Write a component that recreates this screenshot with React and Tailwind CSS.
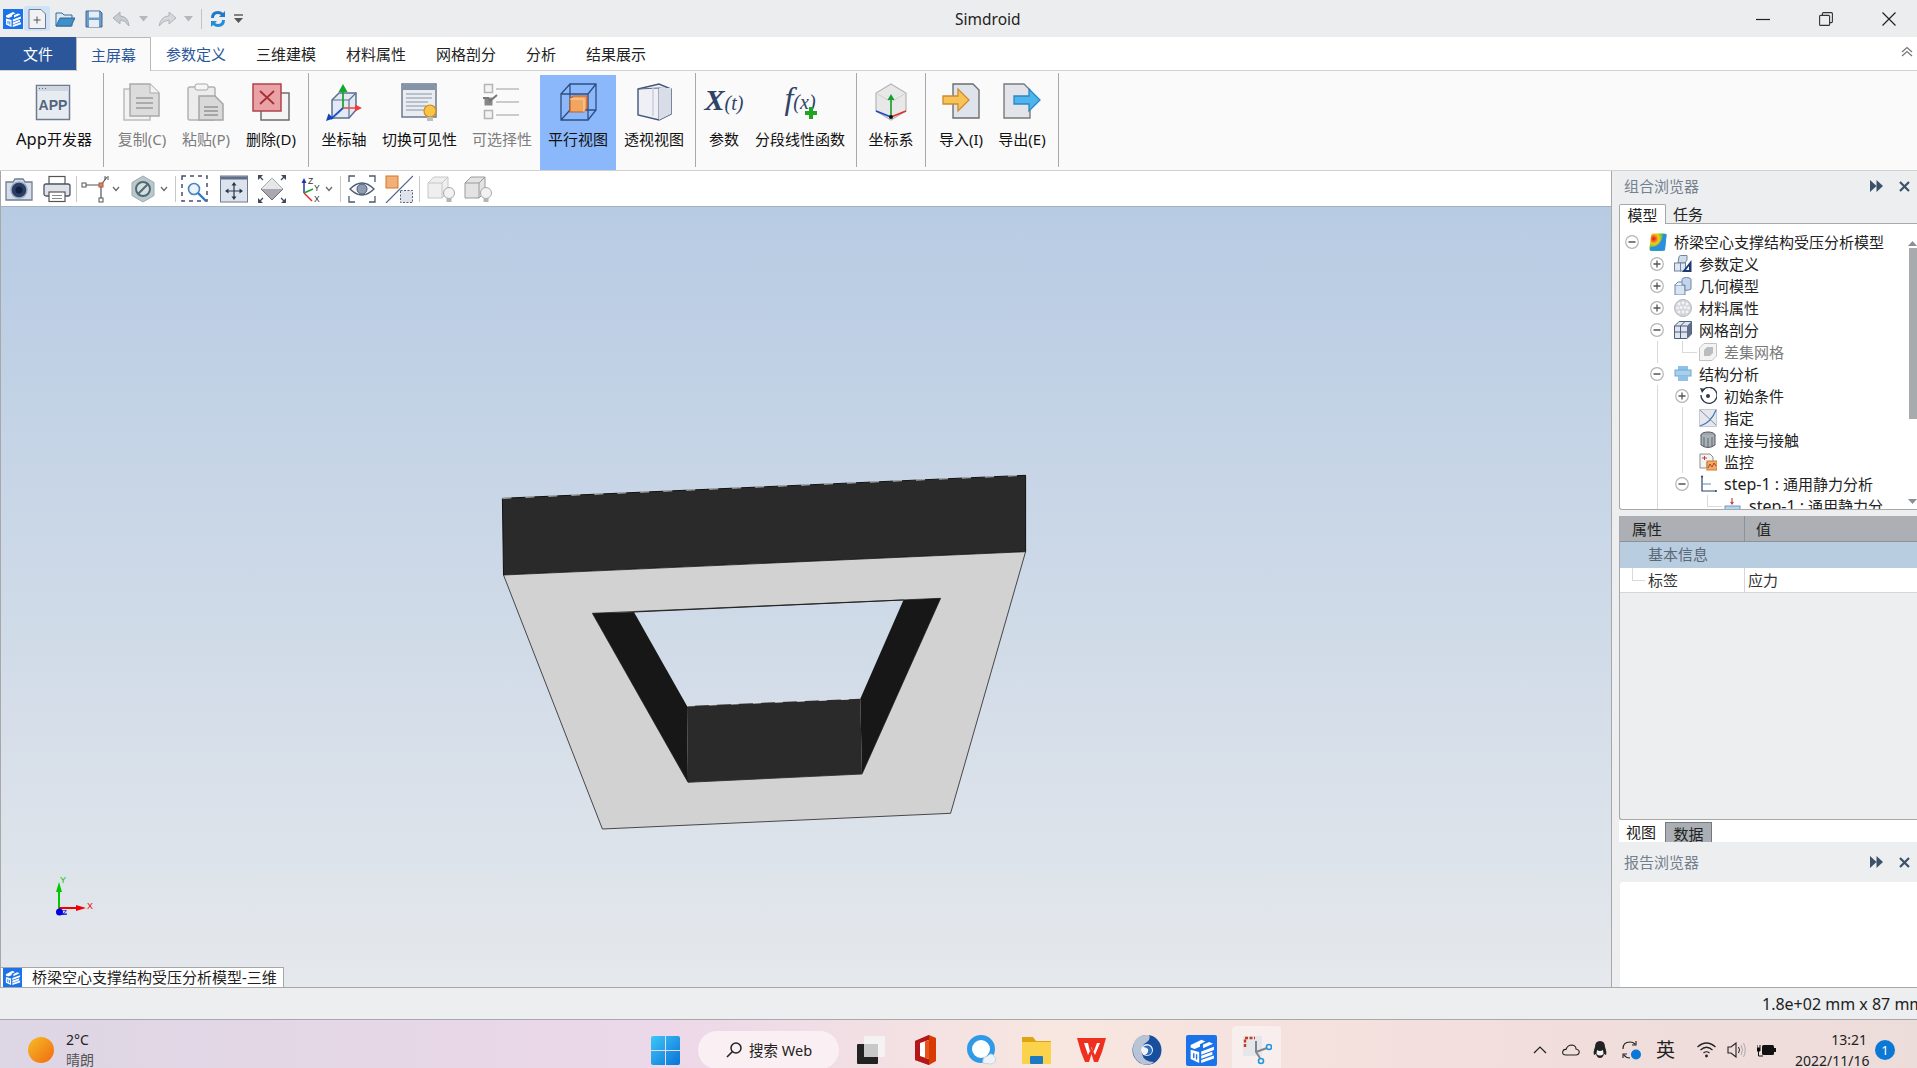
import React from 'react';

const FONT = "font-['Noto_Sans','Noto_Sans_CJK_SC',sans-serif]";

function Svg({ w, h, view, className = '', children }) {
    return (
        <svg width={w} height={h ?? w} viewBox={view ?? `0 0 ${w} ${h ?? w}`} className={`block shrink-0 ${className}`}>
            {children}
        </svg>
    );
}

// --- small app logo, reused in title bar, doc tab and taskbar
function Logo({ size = 20 }) {
    return (
        <Svg w={size} view="0 0 20 20">
            <rect width="20" height="20" fill="#1a73e8" />
            <path d="M3 6.5 L10 3 L12.5 4.2 L9 6 L9 7.5 L5.5 9 L3 8Z" fill="#fff" />
            <path d="M11 6.2 L15 4.5 L17.5 5.6 L11 8.6Z" fill="#fff" />
            <path d="M3 9.5 L8.5 11 V18 L3 15.5Z" fill="#fff" />
            <path d="M5 11.8 V14.8 M6.8 12.4 V15.8" stroke="#1a73e8" strokeWidth="0.9" />
            <path d="M9.8 10.6 L18 7.5 V9.6 L9.8 12.7Z M9.8 13.4 L17 10.8 V12.8 L9.8 15.4Z M9.8 16.1 L18 13.2 V15.2 L9.8 18Z" fill="#fff" />
        </Svg>
    );
}

const Chevron = ({ className = '' }) => (
    <Svg w={8} h={6} className={className}>
        <path d="M1 1 L4 4.5 L7 1" fill="none" stroke="#666" strokeWidth="1.2" />
    </Svg>
);

const SmallTri = ({ className = '' }) => (
    <Svg w={9} h={6} className={className}>
        <path d="M0 0 H9 L4.5 5.5Z" fill="#b4b8bd" />
    </Svg>
);

const Sep = ({ className = '' }) => <div className={`w-px h-[26px] bg-[#c8c8c8] shrink-0 ${className}`} />;

// --- ribbon icons (38 box)
const IconApp = () => (
    <Svg w={38}>
        <rect x="1.5" y="2.5" width="33" height="34" fill="#e7ebf2" stroke="#6e7c90" strokeWidth="1.5" />
        <rect x="2" y="3" width="32" height="5" fill="#cfd6e0" />
        <path d="M4 5.5h1M7 5.5h1M10 5.5h1" stroke="#5f6b7c" />
        <text x="18" y="27" textAnchor="middle" fontFamily="Liberation Sans" fontWeight="700" fontSize="14" fill="#56657c">APP</text>
    </Svg>
);
const IconCopy = () => (
    <Svg w={38}>
        <rect x="1" y="6" width="26" height="31" fill="#f2f2f2" stroke="#bcbcbc" strokeWidth="1.5" />
        <path d="M7 1 H27 L36 10 V33 H7Z" fill="#dcdcdc" stroke="#a9a9a9" strokeWidth="1.5" />
        <path d="M27 1 V10 H36" fill="#f2f2f2" stroke="#a9a9a9" />
        <path d="M13 15 H30 M13 20 H30 M13 25 H30" stroke="#9a9a9a" strokeWidth="1.5" />
    </Svg>
);
const IconPaste = () => (
    <Svg w={38}>
        <rect x="1" y="4" width="27" height="33" rx="2" fill="#ececec" stroke="#b2b2b2" strokeWidth="1.5" />
        <rect x="8" y="1" width="13" height="6" rx="2" fill="#f6f6f6" stroke="#a8a8a8" />
        <path d="M12 13 H28 L36 21 V37 H12Z" fill="#d9d9d9" stroke="#a5a5a5" strokeWidth="1.5" />
        <path d="M17 24 H31 M17 28 H31 M17 32 H31" stroke="#949494" strokeWidth="1.3" />
    </Svg>
);
const IconDelete = () => (
    <Svg w={38}>
        <rect x="9" y="10" width="28" height="27" fill="#f4f4f4" stroke="#6d6d6d" strokeWidth="1.5" />
        <rect x="1" y="1" width="28" height="27" fill="#e9a3a6" stroke="#b04349" strokeWidth="1.5" />
        <path d="M8 8 L22 21 M22 8 L8 21" stroke="#a92f36" strokeWidth="1.8" />
    </Svg>
);
const IconAxes = () => (
    <Svg w={38}>
        <path d="M7 17 L14 10 H31 V27 L24 35 H7Z" fill="#e3e9f2" stroke="#5d6f8e" strokeWidth="1.5" />
        <path d="M7 17 H24 V35 M24 17 L31 10" fill="none" stroke="#5d6f8e" strokeWidth="1.2" />
        <path d="M18 25 V7" stroke="#1fa534" strokeWidth="1.8" />
        <path d="M13.5 9 L18 1 L22.5 9Z" fill="#11a82a" />
        <path d="M18 25 H30" stroke="#ee4b4b" strokeWidth="1.6" />
        <path d="M30 21.5 L37 25 L30 28.5Z" fill="#ee3b3b" />
        <path d="M18 25 L6 36" stroke="#1d53c4" strokeWidth="1.8" />
        <path d="M1 38 L3.5 30.5 L8.5 35.5Z" fill="#1246b8" />
    </Svg>
);
const IconToggleVis = () => (
    <Svg w={38}>
        <rect x="1" y="1" width="34" height="33" fill="#e9ecf1" stroke="#6c7a8e" strokeWidth="1.5" />
        <rect x="2" y="2" width="32" height="5" fill="#8593a8" />
        <path d="M5 11H31M5 15H31M5 19H27M5 23H25M5 27H25" stroke="#a8b1bf" strokeWidth="1.5" />
        <circle cx="29" cy="28" r="6" fill="#f6c644" stroke="#d18a1c" strokeWidth="1.2" />
        <rect x="26" y="34" width="6" height="4" fill="#b9bec6" />
    </Svg>
);
const IconSelectable = () => (
    <Svg w={38}>
        <g stroke="#b4b4b4" strokeWidth="1.5" fill="#f3f3f3">
            <rect x="1.5" y="1.5" width="8" height="8" />
            <rect x="1.5" y="27.5" width="8" height="8" />
        </g>
        <rect x="1.5" y="14.5" width="8" height="8" fill="#888" />
        <path d="M0 15 H5 L7 18 L14 12" stroke="#777" strokeWidth="2" fill="none" />
        <path d="M13 6H36M13 19H36M13 32H36" stroke="#bcbcbc" strokeWidth="1.6" />
    </Svg>
);
const IconParallel = () => (
    <Svg w={38}>
        <path d="M2 11 H29 V37 H2Z M11 1 H37 V27 H11Z M2 11 L11 1 M29 11 L37 1 M2 37 L11 27 M29 37 L37 27" fill="none" stroke="#2f4d82" strokeWidth="1.3" />
        <path d="M11 16 L14 13 H28 V25 L25 29 H11Z" fill="#f0a561" stroke="#c85c24" strokeWidth="1.2" />
        <path d="M11 16 H25 V29" fill="none" stroke="#f8d8b0" strokeWidth="1" />
    </Svg>
);
const IconPerspective = () => (
    <Svg w={38}>
        <path d="M3 6 L24 1 L36 6 V31 L24 37 L3 32Z" fill="#eef0f5" stroke="#43557a" strokeWidth="1.4" />
        <path d="M3 6 L24 5 V37 M24 5 L36 6" fill="none" stroke="#5a6a8a" strokeWidth="1" />
        <path d="M18 5 V33" stroke="#c9cfdb" strokeWidth="1.5" />
        <path d="M24 5 H36 V31 L24 37Z" fill="#d8dde7" />
    </Svg>
);
const IconParam = () => (
    <Svg w={42} h={38}>
        <text x="21" y="27" textAnchor="middle" fontFamily="Liberation Serif" fontStyle="italic" fill="#2f4368">
            <tspan fontSize="30" fontWeight="700">X</tspan>
            <tspan fontSize="20">(t)</tspan>
        </text>
    </Svg>
);
const IconFx = () => (
    <Svg w={42} h={38}>
        <text x="21" y="26" textAnchor="middle" fontFamily="Liberation Serif" fontStyle="italic" fill="#2f4368">
            <tspan fontSize="32">f</tspan>
            <tspan fontSize="20">(x)</tspan>
        </text>
        <path d="M30 24 H34 V28 H38 V32 H34 V36 H30 V32 H26 V28 H30Z" fill="#1fa51f" />
    </Svg>
);
const IconCoord = () => (
    <Svg w={38}>
        <path d="M19 1 L34 10 V28 L19 37 L4 28 V10Z" fill="#e8e8e8" stroke="#b5b5b5" strokeWidth="1.2" />
        <path d="M4 10 L19 19 L34 10 M19 19 V37" fill="none" stroke="#cfcfcf" />
        <path d="M19 14 V33" stroke="#11a22a" strokeWidth="1.6" />
        <path d="M15.5 17 L19 11 L22.5 17Z" fill="#11a22a" />
        <path d="M19 34 L34 28" stroke="#e0322f" strokeWidth="1.8" />
        <path d="M19 34 L4 28" stroke="#1e49c0" strokeWidth="1.8" />
        <circle cx="19" cy="34" r="2" fill="#111" />
    </Svg>
);
const IconImport = () => (
    <Svg w={38}>
        <path d="M11 1 H31 L37 7 V35 H11Z" fill="#dfe3eb" stroke="#6d6d6d" strokeWidth="1.4" />
        <path d="M1 13 H16 V6 L27 17 L16 28 V21 H1Z" fill="#f6c35a" stroke="#d18a2a" strokeWidth="1.3" />
    </Svg>
);
const IconExport = () => (
    <Svg w={38}>
        <path d="M1 1 H21 L27 7 V35 H1Z" fill="#e2e4ea" stroke="#7a7a7a" strokeWidth="1.4" />
        <path d="M11 13 H26 V6 L37 17 L26 28 V21 H11Z" fill="#4eb4ec" stroke="#2a86c8" strokeWidth="1.3" />
    </Svg>
);

function RibbonBtn({ w, label, muted, active, children }) {
    return (
        <div className={`${w} shrink-0 flex flex-col items-center pt-2 ${active ? 'bg-[#8ab8fb]' : ''}`}>
            {children}
            <div className={`mt-[8px] text-[15px] leading-[20px] whitespace-nowrap ${muted ? 'text-[#7d7d7d]' : 'text-[#111]'}`}>{label}</div>
        </div>
    );
}
const RibbonSep = ({ className = '' }) => <div className={`w-px bg-[#a9a9a9] -mt-[2px] mb-[3px] shrink-0 ${className}`} />;

// --- toolbar icons
const ToolCamera = () => (
    <Svg w={28} className="ml-[4px]">
        <path d="M1 7 H8 L10 4 H18 L20 7 H27 V25 H1Z" fill="#d6dde8" stroke="#6f7f96" strokeWidth="1.3" />
        <circle cx="14" cy="15" r="8" fill="#2a3e66" stroke="#9eaabc" strokeWidth="1.4" />
        <circle cx="14" cy="15" r="3.5" fill="#10203f" />
    </Svg>
);
const ToolPrint = () => (
    <Svg w={28} className="ml-[10px]">
        <rect x="6" y="1.5" width="16" height="8" fill="#fff" stroke="#555" strokeWidth="1.2" />
        <rect x="1" y="9" width="26" height="12" rx="2" fill="#dfe3e9" stroke="#4d5663" strokeWidth="1.3" />
        <rect x="6" y="17" width="16" height="9.5" fill="#fff" stroke="#555" strokeWidth="1.2" />
        <path d="M9 20.5H19M9 23.5H19" stroke="#888" />
    </Svg>
);
const ToolSection = () => (
    <Svg w={28} className="ml-[4px]">
        <path d="M3 10 H20 M20 10 V25 M20 10 L26 2" stroke="#555" strokeWidth="1.2" fill="none" />
        <rect x="1" y="8" width="4" height="4" fill="#fff" stroke="#555" />
        <rect x="18" y="8" width="4" height="4" fill="#e08a4a" stroke="#a55" />
        <rect x="18" y="23" width="4" height="4" fill="#fff" stroke="#555" />
        <path d="M24 1V5M27 1V5" stroke="#555" />
    </Svg>
);
const ToolHex = () => (
    <Svg w={24} h={28} className="ml-[11px]">
        <path d="M12 1 L23 7.5 V20.5 L12 27 L1 20.5 V7.5Z" fill="#b9c8cc" stroke="#9aa9ad" />
        <circle cx="12" cy="14" r="7" fill="#d5dee0" stroke="#4f6a70" strokeWidth="2" />
        <path d="M7.5 18.5 L16.5 9.5" stroke="#4f6a70" strokeWidth="2" />
    </Svg>
);
const ToolZoomBox = () => (
    <Svg w={28} className="ml-[5px]">
        <rect x="1" y="1" width="25" height="25" fill="none" stroke="#44506a" strokeWidth="1.5" strokeDasharray="4 4" />
        <circle cx="13" cy="14" r="5.5" fill="#eaf2fb" stroke="#4a82bf" strokeWidth="1.6" />
        <path d="M17 18 L25 26" stroke="#2e78c8" strokeWidth="2.4" />
    </Svg>
);
const ToolPan = () => (
    <Svg w={28} className="ml-[11px]">
        <rect x="0.5" y="1" width="27" height="26" fill="#dde3ec" stroke="#6a7890" />
        <rect x="1" y="1.5" width="26" height="3" fill="#5f6f88" />
        <path d="M14 9 V23 M7 16 H21" stroke="#28384f" strokeWidth="1.2" />
        <path d="M14 7 L11.5 10.5 H16.5Z M14 25 L11.5 21.5 H16.5Z M5 16 L8.5 13.5 V18.5Z M23 16 L19.5 13.5 V18.5Z" fill="#28384f" />
    </Svg>
);
const ToolFit = () => (
    <Svg w={28} className="ml-[10px]">
        <path d="M14 3 L25 14 L14 25 L3 14Z" fill="#a8a8ae" stroke="#6d7078" />
        <path d="M14 3 L25 14 H3Z" fill="#e6e6e8" />
        <path d="M1 1 L5 5 M27 1 L23 5 M1 27 L5 23 M27 27 L23 23" stroke="#3d4a60" strokeWidth="1.3" />
        <path d="M0 0 H5 L0 5Z M28 0 H23 L28 5Z M0 28 H5 L0 23Z M28 28 H23 L28 23Z" fill="#3d4a60" />
    </Svg>
);
const ToolTriad = () => (
    <Svg w={24} h={28} className="ml-[11px]">
        <path d="M7 18 V6" stroke="#2238a8" strokeWidth="1.5" />
        <path d="M7 18 L16 14" stroke="#18a838" strokeWidth="1.5" />
        <path d="M7 18 L15 26" stroke="#e02828" strokeWidth="1.5" />
        <path d="M4.5 8 L7 3 L9.5 8Z" fill="#2238a8" />
        <text x="11" y="9" fontFamily="Liberation Sans" fontSize="8.5" fill="#333">Z</text>
        <text x="17" y="16" fontFamily="Liberation Sans" fontSize="8.5" fill="#333">Y</text>
        <text x="17" y="27" fontFamily="Liberation Sans" fontSize="8.5" fill="#333">X</text>
    </Svg>
);
const ToolEye = () => (
    <Svg w={28} className="ml-[7px]">
        <path d="M1 7 V1 H7 M21 1 H27 V7 M27 21 V27 H21 M7 27 H1 V21" fill="none" stroke="#4a5a72" strokeWidth="1.3" />
        <path d="M2 14 Q14 2 26 14 Q14 26 2 14Z" fill="#f4f6fa" stroke="#4a5a72" strokeWidth="1.3" />
        <circle cx="14" cy="14" r="5" fill="#8f9bb0" stroke="#4a5a72" />
    </Svg>
);
const ToolSplit = () => (
    <Svg w={28} className="ml-[9px]">
        <rect x="1" y="1" width="12" height="12" fill="#f1b078" stroke="#d5762c" />
        <rect x="15.5" y="15.5" width="12" height="12" fill="#dfe4ec" stroke="#4f6080" strokeDasharray="2 1.5" />
        <path d="M1 28 L28 1" stroke="#54688c" strokeWidth="1.2" />
    </Svg>
);
const ToolCubeBulb = ({ dark, className }) => (
    <Svg w={28} className={className}>
        <path d="M1 8 L7 2 H21 V17 L15 23 H1Z" fill={dark ? '#e3e3e3' : '#efefef'} stroke={dark ? '#9a9a9a' : '#c6c6c6'} />
        <path d="M1 8 H15 V23 M15 8 L21 2" fill="none" stroke={dark ? '#9a9a9a' : '#c6c6c6'} />
        <circle cx="22" cy="18" r="5.5" fill="#f2f2f2" stroke="#a8a8a8" />
        <rect x="19.5" y="23" width="5" height="4" fill="#b5b5b5" />
    </Svg>
);

// --- tree icons (18 box)
const icons = {
    root: (
        <Svg w={18}>
            <defs>
                <radialGradient id="fea" cx="0.25" cy="0.3" r="0.95">
                    <stop offset="0" stopColor="#e8101c" />
                    <stop offset="0.3" stopColor="#f7c81c" />
                    <stop offset="0.6" stopColor="#38c838" />
                    <stop offset="1" stopColor="#2c8ee0" />
                </radialGradient>
            </defs>
            <path d="M4 0.5 H15 Q18 0.5 17.5 3 L16 15 Q15.5 18 13 18 H3 Q0 18 0.5 15 L2 3 Q2.2 0.5 4 0.5Z" fill="url(#fea)" />
            <path d="M14 1 H17.5 L16 17.5 H1 L1.5 14 Q12 14 14 1Z" fill="#2c8ee0" />
        </Svg>
    ),
    param: (
        <Svg w={18}>
            <path d="M5 1.5 L6.5 0.5 H13 V5 L11 8 H4Z" fill="#cfdcec" stroke="#71839e" />
            <rect x="0.5" y="8" width="6" height="8" fill="#dfe7f1" stroke="#71839e" />
            <rect x="6.5" y="8" width="5" height="8" fill="#dfe7f1" stroke="#71839e" />
            <path d="M17.5 5 V17 H8Z" fill="#1f3a72" />
            <path d="M15 11 V15 H12Z" fill="#fff" />
        </Svg>
    ),
    geom: (
        <Svg w={18}>
            <rect x="1" y="8" width="10" height="10" fill="#d7e4f3" stroke="#6e88a8" />
            <path d="M1 8 L4 5 H11 V8" fill="#eaf1f9" stroke="#6e88a8" />
            <path d="M8 5 V2.5 Q8 0.5 12.5 0.5 Q17 0.5 17 2.5 V12 Q17 13 11 13.5 V8 H8Z" fill="#c3d5ea" stroke="#6e88a8" />
        </Svg>
    ),
    material: (
        <Svg w={18}>
            <circle cx="9" cy="9" r="8.5" fill="#d4d6dc" stroke="#b5b8c0" />
            <g fill="#f4f4f6">
                <circle cx="5" cy="5" r="1.4" /><circle cx="9" cy="4" r="1.4" /><circle cx="13" cy="5" r="1.4" />
                <circle cx="3.5" cy="9" r="1.4" /><circle cx="7" cy="8.5" r="1.4" /><circle cx="11" cy="8.5" r="1.4" /><circle cx="14.5" cy="9" r="1.4" />
                <circle cx="5" cy="13" r="1.4" /><circle cx="9" cy="13" r="1.4" /><circle cx="13" cy="13" r="1.4" />
            </g>
        </Svg>
    ),
    mesh: (
        <Svg w={18}>
            <path d="M0.5 5 L5 0.5 H17.5 V13 L13 17.5 H0.5Z" fill="#dfe4ed" stroke="#4c5f7c" />
            <path d="M17.5 0.5 L13 5 V17.5 L17.5 13Z" fill="#5f6f88" />
            <path d="M0.5 5 H13 M6.5 5 V17.5 M0.5 11 H13 M6.5 5 L11 0.5" fill="none" stroke="#4c5f7c" />
        </Svg>
    ),
    diff: (
        <Svg w={18}>
            <path d="M0.5 5 L5 0.5 H17.5 V13 L13 17.5 H0.5Z" fill="#f3f3f3" stroke="#c4c4c4" />
            <path d="M5 7 L8 4 H14 V10 L11 13 H5Z" fill="#bcbcbc" />
        </Svg>
    ),
    analysis: (
        <Svg w={18}>
            <rect x="4" y="1" width="10" height="4" fill="#8fc2e6" />
            <rect x="1" y="5" width="16" height="6" fill="#a6d0ec" stroke="#6fa8d0" />
            <rect x="4" y="11" width="10" height="5" fill="#8fc2e6" />
        </Svg>
    ),
    init: (
        <Svg w={18}>
            <path d="M4 3 A8 8 0 1 1 2 8" fill="none" stroke="#2d3a4e" strokeWidth="1.3" />
            <path d="M1 1 L6 2 L3 6Z" fill="#2d3a4e" />
            <circle cx="9" cy="9" r="2" fill="#2d3a4e" />
        </Svg>
    ),
    assign: (
        <Svg w={18}>
            <rect x="0.5" y="0.5" width="17" height="17" fill="#e5e7ec" stroke="#c5cad3" />
            <path d="M1 1 L17 16" stroke="#8090a8" />
            <path d="M1 17 Q12 14 17 1" fill="none" stroke="#3f78b8" strokeWidth="1.2" />
        </Svg>
    ),
    contact: (
        <Svg w={18}>
            <ellipse cx="9" cy="4" rx="7" ry="3" fill="#9fa7ab" stroke="#556" />
            <path d="M2 4 V14 Q9 19 16 14 V4" fill="#a9b2b6" stroke="#556" />
            <path d="M5 6V16M9 7V17M13 6V16" stroke="#5c6a70" />
        </Svg>
    ),
    monitor: (
        <Svg w={18}>
            <path d="M1 1 H11 L14 4 V9 H8 V15 H1Z" fill="#f3f3f3" stroke="#8d8d8d" />
            <path d="M3 5 H8 M5.5 3 V7" stroke="#c04040" />
            <rect x="8" y="8" width="10" height="9" fill="#f2a869" stroke="#d27a2c" />
            <path d="M9 15 L11 11 L13 14 L15 10 L17 13" fill="none" stroke="#a5481a" />
        </Svg>
    ),
    step: (
        <Svg w={18}>
            <path d="M3 1 V16 H17" fill="none" stroke="#2c4468" strokeWidth="1.2" />
            <path d="M3 9 H12" stroke="#5c8ac0" />
            <circle cx="3" cy="1.5" r="1" fill="#2c4468" />
            <circle cx="17" cy="16" r="1" fill="#2c4468" />
        </Svg>
    ),
    load: (
        <Svg w={18}>
            <rect x="1" y="9" width="15" height="9" fill="#b6d4ec" stroke="#6c9cc4" />
            <path d="M8 1 V7" stroke="#d04040" strokeWidth="1.2" />
            <path d="M6 5 H10 L8 8Z" fill="#d04040" />
        </Svg>
    ),
};

const Expander = ({ open }) => (
    <Svg w={14} className="shrink-0">
        <circle cx="7" cy="7" r="6.3" fill="#fff" stroke="#b5b5b5" strokeWidth="1.2" />
        <path d={open ? 'M3.5 7H10.5' : 'M3.5 7H10.5M7 3.5V10.5'} stroke="#555" strokeWidth="1.3" />
    </Svg>
);

const LEVEL_PADDING = ['pl-[5px]', 'pl-[30px]', 'pl-[55px]', 'pl-[80px]'];

function TreeRow({ level, expander, icon, label, muted, lines = [], elbow }) {
    return (
        <div className={`relative h-[22px] flex items-center whitespace-nowrap ${LEVEL_PADDING[level]}`}>
            {lines.map((x) => (
                <span key={x} className="absolute top-0 bottom-0 w-px bg-[#d9d9d9]" style={{ left: x }} />
            ))}
            {elbow != null && (
                <>
                    <span className="absolute top-0 h-[11px] w-px bg-[#d9d9d9]" style={{ left: elbow }} />
                    <span className="absolute top-[11px] h-px w-[15px] bg-[#d9d9d9]" style={{ left: elbow }} />
                </>
            )}
            <div className="w-[14px] shrink-0 relative">{expander && <Expander open={expander === 'open'} />}</div>
            <div className="ml-[10px] w-[18px] shrink-0 relative bg-white">{icons[icon]}</div>
            <div className={`ml-[7px] text-[15px] leading-[22px] ${muted ? 'text-[#7a7a7a]' : 'text-[#222]'}`}>{label}</div>
        </div>
    );
}

const DoubleArrow = () => (
    <Svg w={13} h={12}>
        <path d="M0 0 L6.5 6 L0 12Z M6.5 0 L13 6 L6.5 12Z" fill="#3c5068" />
    </Svg>
);
const CloseX = () => (
    <Svg w={11}>
        <path d="M1 1 L10 10 M10 1 L1 10" stroke="#3c5068" strokeWidth="2.2" />
    </Svg>
);

function PanelHeader({ title, height }) {
    return (
        <div className={`${height} flex items-center pl-[12px] shrink-0`}>
            <div className="text-[15px] leading-[20px] text-[#74808e]">{title}</div>
            <div className="ml-auto mr-[7px] flex items-center gap-[16px]">
                <DoubleArrow />
                <CloseX />
            </div>
        </div>
    );
}

// --- 3D viewport drawing, in page coordinates
function Model() {
    return (
        <svg viewBox="0 207 1611 760" width="1611" height="760" className="block shrink-0">
            <path d="M501.4 498.3 L1024.6 475.3 L1024.6 551.7 L502.5 575Z" fill="#2a2a2a" stroke="#111" />
            <path d="M501.4 498.3 L1024.6 475.3" stroke="#f0f0f0" strokeWidth="0.8" strokeDasharray="9 14" />
            <path fillRule="evenodd" d="M502.5 575 L1024.6 551.7 L949.6 813.3 L601.4 829Z M591.4 613.3 L939.6 598.3 L861 774 L687 782.3Z" fill="#d2d2d2" stroke="#222" strokeWidth="0.8" />
            <path d="M591.4 613.3 L632.9 612 L686 706 L687 782.3Z" fill="#171717" />
            <path d="M902.5 600 L939.6 598.3 L861 774 L859.3 698.7Z" fill="#171717" />
            <path d="M686 706 L859.3 698.7 L861 774 L687 782.3Z" fill="#2a2a2a" />
            <path d="M686 706 L859.3 698.7" stroke="#f0f0f0" strokeWidth="0.8" strokeDasharray="8 14" />
            <path d="M632.9 612 L902.5 600" stroke="#222" />
            {/* axis triad */}
            <path d="M58 912 V890" stroke="#00c800" strokeWidth="2" />
            <path d="M55 892 L58 882 L61 892Z" fill="#00c800" />
            <path d="M58 908 H76" stroke="#f00000" strokeWidth="2" />
            <path d="M75 905 L85 908 L75 911Z" fill="#f00000" />
            <circle cx="58.5" cy="912" r="3.5" fill="#0000e0" />
            <path d="M61 914 H66" stroke="#0000e0" />
            <text x="59" y="883" fontFamily="Liberation Sans" fontSize="9" fill="#00c800">Y</text>
            <text x="86" y="909" fontFamily="Liberation Sans" fontSize="9" fill="#f00000">X</text>
            <text x="61" y="915" fontFamily="Liberation Sans" fontSize="8" fill="#0000e0">Z</text>
        </svg>
    );
}

// --- taskbar icons
const WinLogo = () => (
    <Svg w={29} className="ml-[545px]">
        <defs>
            <linearGradient id="win" x1="0" y1="0" x2="1" y2="1">
                <stop offset="0" stopColor="#3cc8f8" />
                <stop offset="1" stopColor="#0a72d8" />
            </linearGradient>
        </defs>
        <path d="M0 2 Q0 0 2 0 H14 V14 H0Z M15 0 H27 Q29 0 29 2 V14 H15Z M0 15 H14 V29 H2 Q0 29 0 27Z M15 15 H29 V27 Q29 29 27 29 H15Z" fill="url(#win)" />
    </Svg>
);

export default function App() {
    return (
        <div className={`w-[1917px] h-[1068px] overflow-hidden flex flex-col bg-white ${FONT}`}>
            {/* title bar */}
            <div className="h-[37px] shrink-0 bg-[#ecedef] flex items-center">
                <div className="ml-[3px]"><Logo /></div>
                <div className="ml-px w-[26px] h-[25px] bg-[#cfe3f8] rounded-[2px] flex items-center justify-center">
                    <Svg w={18} h={20}>
                        <path d="M1 0.5 H13 L17.5 5 V19.5 H1Z" fill="#f0f2f6" stroke="#6f7a8a" />
                        <path d="M5.5 11H12.5M9 7.5V14.5" stroke="#555" />
                    </Svg>
                </div>
                <Svg w={20} h={18} className="ml-[5px]">
                    <path d="M1 3 H7 L9 5 H17 V16 H1Z" fill="#dce8f2" stroke="#2f6a9c" />
                    <path d="M1 16 L5 8 H20 L16 16Z" fill="#3f8fc8" stroke="#2f6a9c" />
                </Svg>
                <Svg w={18} className="ml-[10px]">
                    <path d="M1 1 H15 L17 3 V17 H1Z" fill="#6f9cc6" stroke="#3d6a98" />
                    <rect x="4" y="1.5" width="10" height="6" fill="#e6edf5" />
                    <rect x="4" y="10" width="10" height="7" fill="#e6edf5" />
                </Svg>
                <Svg w={18} className="ml-[9px]">
                    <path d="M1 8 L8 2 V6 Q16 6 17 16 Q13 10 8 10 V14Z" fill="#c8ccd2" stroke="#aab0b8" />
                </Svg>
                <SmallTri className="ml-[9px]" />
                <Svg w={20} h={18} className="ml-[9px]">
                    <path d="M19 8 L12 2 V6 Q4 6 2 16 Q7 10 12 10 V14Z" fill="#d4d7dc" stroke="#b0b5bc" />
                </Svg>
                <SmallTri className="ml-[7px]" />
                <div className="ml-[8px] w-px h-[20px] bg-[#c4c4c4]" />
                <Svg w={16} h={20} className="ml-[8px]">
                    <path d="M1 9 Q1 2 8 2 Q11 2 13 4 L15 2 V8 H9 L11 6 Q9 5 8 5 Q4 5 4 9Z" fill="#1f78c8" />
                    <path d="M15 11 Q15 18 8 18 Q5 18 3 16 L1 18 V12 H7 L5 14 Q7 15 8 15 Q12 15 12 11Z" fill="#1f8fd8" />
                </Svg>
                <Svg w={9} h={10} className="ml-[8px]">
                    <path d="M0 1H9" stroke="#555" strokeWidth="1.4" />
                    <path d="M0 4 H9 L4.5 9Z" fill="#555" />
                </Svg>
                <div className="ml-[712px] text-[15.5px] leading-[20px] text-[#222]">Simdroid</div>
                <div className="ml-auto mr-[21px] flex items-center gap-[49px]">
                    <Svg w={14}><path d="M0 7.5H14" stroke="#222" strokeWidth="1.2" /></Svg>
                    <Svg w={14}>
                        <rect x="0.6" y="3.4" width="10" height="10" rx="1" fill="none" stroke="#333" strokeWidth="1.1" />
                        <path d="M3.4 3 V1.6 Q3.4 0.6 4.4 0.6 H12.4 Q13.4 0.6 13.4 1.6 V9.6 Q13.4 10.6 12.4 10.6 H11" fill="none" stroke="#333" strokeWidth="1.1" />
                    </Svg>
                    <Svg w={14}><path d="M0.5 0.5 L13.5 13.5 M13.5 0.5 L0.5 13.5" stroke="#222" strokeWidth="1.2" /></Svg>
                </div>
            </div>

            {/* ribbon tabs */}
            <div className="h-[33px] shrink-0 bg-white flex text-[15px] leading-[35px] text-[#222] relative">
                <div className="w-[76px] bg-[#2b579a] text-white text-center">文件</div>
                <div className="w-[75px] h-[34px] bg-[#fafafa] text-center text-[#2b579a] border border-b-0 border-[#b9b9b9] relative z-10">主屏幕</div>
                <div className="ml-[15px] text-[#2b579a]">参数定义</div>
                <div className="ml-[30px]">三维建模</div>
                <div className="ml-[30px]">材料属性</div>
                <div className="ml-[30px]">网格剖分</div>
                <div className="ml-[30px]">分析</div>
                <div className="ml-[30px]">结果展示</div>
                <Svg w={12} h={12} className="ml-auto mr-[4px] mt-[9px]">
                    <path d="M1 6 L6 1.5 L11 6 M1 10 L6 5.5 L11 10" fill="none" stroke="#777" strokeWidth="1.3" />
                </Svg>
            </div>

            {/* ribbon */}
            <div className="h-[101px] shrink-0 bg-[#fafafa] border-y border-[#d2d2d2] flex pt-[4px]">
                <div className="w-[5px] shrink-0" />
                <RibbonBtn w="w-[98px]" label={<><span className="text-[16.5px]">App</span>开发器</>}><IconApp /></RibbonBtn>
                <RibbonSep />
                <div className="w-[6px] shrink-0" />
                <RibbonBtn w="w-[64px]" label="复制(C)" muted><IconCopy /></RibbonBtn>
                <RibbonBtn w="w-[64px]" label="粘贴(P)" muted><IconPaste /></RibbonBtn>
                <RibbonBtn w="w-[66px]" label="删除(D)"><IconDelete /></RibbonBtn>
                <div className="w-[4px] shrink-0" />
                <RibbonSep />
                <div className="w-[4px] shrink-0" />
                <RibbonBtn w="w-[62px]" label="坐标轴"><IconAxes /></RibbonBtn>
                <RibbonBtn w="w-[89px]" label="切换可见性"><IconToggleVis /></RibbonBtn>
                <RibbonBtn w="w-[76px]" label="可选择性" muted><IconSelectable /></RibbonBtn>
                <RibbonBtn w="w-[76px]" label="平行视图" active><IconParallel /></RibbonBtn>
                <RibbonBtn w="w-[76px]" label="透视视图"><IconPerspective /></RibbonBtn>
                <div className="w-[3px] shrink-0" />
                <RibbonSep />
                <RibbonBtn w="w-[56px]" label="参数"><IconParam /></RibbonBtn>
                <RibbonBtn w="w-[96px]" label="分段线性函数"><IconFx /></RibbonBtn>
                <div className="w-[8px] shrink-0" />
                <RibbonSep />
                <RibbonBtn w="w-[68px]" label="坐标系"><IconCoord /></RibbonBtn>
                <RibbonSep />
                <RibbonBtn w="w-[70px]" label="导入(I)"><IconImport /></RibbonBtn>
                <RibbonBtn w="w-[52px]" label="导出(E)"><IconExport /></RibbonBtn>
                <div className="w-[10px] shrink-0" />
                <RibbonSep />
            </div>

            {/* work area */}
            <div className="h-[816px] shrink-0 flex">
                <div className="w-[1612px] shrink-0 flex flex-col border-x border-[#a8a8a8] border-t-0">
                    <div className="h-[36px] shrink-0 bg-white flex items-center border-b border-[#a5b1c2]">
                        <ToolCamera />
                        <ToolPrint />
                        <Sep className="ml-[5px]" />
                        <ToolSection />
                        <Chevron className="ml-[3px]" />
                        <ToolHex />
                        <Chevron className="ml-[5px]" />
                        <Sep className="ml-[7px]" />
                        <ToolZoomBox />
                        <ToolPan />
                        <ToolFit />
                        <ToolTriad />
                        <Chevron className="ml-[4px]" />
                        <Sep className="ml-[7px]" />
                        <ToolEye />
                        <ToolSplit />
                        <Sep className="ml-[6px]" />
                        <ToolCubeBulb className="ml-[7px]" />
                        <ToolCubeBulb dark className="ml-[9px]" />
                    </div>
                    <div className="flex-1 flex flex-col bg-[linear-gradient(180deg,#b7cbe3_0%,#e5e8ec_100%)]">
                        <Model />
                        <div className="h-[20px] w-[283px] shrink-0 flex items-center bg-white border-t border-r border-[#a8a8a8]">
                            <div className="ml-[2px]"><Logo size={19} /></div>
                            <div className="ml-[10px] text-[15px] leading-[19px] whitespace-nowrap text-[#222]">桥梁空心支撑结构受压分析模型-三维</div>
                        </div>
                    </div>
                </div>

                {/* right panels */}
                <div className="w-[305px] shrink-0 bg-[#eceef0] flex flex-col">
                    <PanelHeader title="组合浏览器" height="h-[30px] mb-[3px]" />
                    <div className="h-[19px] shrink-0 ml-[7px] flex text-[15px] leading-[20px] text-[#222]">
                        <div className="w-[47px] h-[20px] bg-white border border-b-0 border-[#a8a8a8] rounded-t-[2px] text-center relative z-10">模型</div>
                        <div className="ml-[7px]">任务</div>
                    </div>
                    <div className="h-[287px] shrink-0 ml-[7px] bg-white border border-r-0 border-[#a8a8a8] rounded-bl-[3px] pt-[7px] overflow-hidden relative">
                        <TreeRow level={0} expander="open" icon="root" label="桥梁空心支撑结构受压分析模型" />
                        <TreeRow level={1} expander="closed" icon="param" label="参数定义" />
                        <TreeRow level={1} expander="closed" icon="geom" label="几何模型" />
                        <TreeRow level={1} expander="closed" icon="material" label="材料属性" />
                        <TreeRow level={1} expander="open" icon="mesh" label="网格剖分" />
                        <TreeRow level={2} icon="diff" label="差集网格" muted lines={[37]} elbow={62} />
                        <TreeRow level={1} expander="open" icon="analysis" label="结构分析" />
                        <TreeRow level={2} expander="closed" icon="init" label="初始条件" lines={[37]} />
                        <TreeRow level={2} icon="assign" label="指定" lines={[37, 62]} />
                        <TreeRow level={2} icon="contact" label="连接与接触" lines={[37, 62]} />
                        <TreeRow level={2} icon="monitor" label="监控" lines={[37, 62]} />
                        <TreeRow level={2} expander="open" icon="step" label={<><span className="text-[16px]">step-1 :</span> 通用静力分析</>} lines={[37]} />
                        <TreeRow level={3} icon="load" label={<><span className="text-[16px]">step-1 :</span> 通用静力分</>} lines={[37]} elbow={87} />
                        {/* scrollbar */}
                        <div className="absolute right-0 top-[17px] bottom-0 w-[9px] flex flex-col items-center bg-white">
                            <Svg w={9} h={6}><path d="M0 5 L4.5 0 L9 5Z" fill="#8a8f95" /></Svg>
                            <div className="w-[8px] h-[171px] mt-px bg-[#a8abae]" />
                            <Svg w={9} h={6} className="mt-[80px]"><path d="M0 0 L4.5 5 L9 0Z" fill="#8a8f95" /></Svg>
                        </div>
                    </div>
                    <div className="h-[6px] shrink-0" />
                    <div className="h-[304px] shrink-0 ml-[7px] border-l border-b border-[#a8a8a8] rounded-bl-[3px] flex flex-col text-[15px] leading-[26px]">
                        <div className="h-[26px] shrink-0 flex bg-[#acb0b4] border-b border-[#8d9297] text-[#222]">
                            <div className="w-[125px] pl-[12px] border-r border-[#8d9297]">属性</div>
                            <div className="pl-[11px]">值</div>
                        </div>
                        <div className="h-[26px] shrink-0 bg-[#b9cde0] pl-[28px] text-[#5d6876] leading-[25px]">基本信息</div>
                        <div className="h-[25px] shrink-0 flex bg-white border-b border-[#d6d6d6] text-[#333] relative leading-[24px]">
                            <span className="absolute left-[12px] top-0 h-[12px] w-px bg-[#d9d9d9]" />
                            <span className="absolute left-[12px] top-[12px] h-px w-[13px] bg-[#d9d9d9]" />
                            <div className="w-[125px] pl-[28px] border-r border-[#d6d6d6]">标签</div>
                            <div className="pl-[3px]">应力</div>
                        </div>
                    </div>
                    <div className="h-[22px] shrink-0 ml-[7px] bg-white flex text-[15px] leading-[24px] text-[#222]">
                        <div className="ml-[7px]">视图</div>
                        <div className="ml-[9px] mt-[2px] w-[47px] h-[20px] bg-[#a9afb4] border border-b-0 border-[#75797d] text-center leading-[22px]">数据</div>
                    </div>
                    <PanelHeader title="报告浏览器" height="h-[40px]" />
                    <div className="flex-1 ml-[8px] bg-white rounded-tl-[3px]" />
                </div>
            </div>

            {/* status bar */}
            <div className="h-[33px] shrink-0 bg-[#eceef0] border-y border-[#a8a8a8] flex items-center">
                <div className="ml-auto w-[155px] overflow-hidden whitespace-nowrap text-[16px] leading-[20px] text-[#222]">1.8e+02 mm x 87 mm</div>
            </div>

            {/* taskbar */}
            <div className="h-[48px] shrink-0 overflow-hidden bg-[linear-gradient(90deg,#ddd6e4_0%,#ecd8e8_35%,#f8e6e0_55%,#f3dfdd_75%,#ecdcda_100%)]">
                <div className="h-[60px] flex items-center">
                    <div className="ml-[28px] w-[26px] h-[26px] rounded-full bg-[linear-gradient(135deg,#f4bd28,#f26a0e)]" />
                    <div className="ml-[12px] w-[40px] text-[14px] leading-[20px]">
                        <div className="text-[#222]">2°C</div>
                        <div className="text-[#555]">晴朗</div>
                    </div>
                    <WinLogo />
                    <div className="ml-[18px] w-[141px] h-[38px] rounded-full bg-[#faf0f3] flex items-center pl-[28px]">
                        <Svg w={16}>
                            <circle cx="10" cy="6" r="5" fill="none" stroke="#222" strokeWidth="1.5" />
                            <path d="M6.5 9.5 L1 15" stroke="#222" strokeWidth="1.6" />
                        </Svg>
                        <div className="ml-[7px] text-[14.5px] leading-[20px] text-[#222] whitespace-nowrap">搜索 Web</div>
                    </div>
                    <Svg w={30} className="ml-[17px]">
                        <rect x="8" y="1" width="21" height="21" rx="1" fill="#f4f2f3" />
                        <rect x="1" y="9" width="21" height="20" rx="1" fill="#222" />
                        <rect x="8" y="9" width="14" height="13" fill="#c8c8c8" />
                    </Svg>
                    <Svg w={23} h={30} className="ml-[28px]">
                        <path d="M1 6 L15 0 L22 3 V26 L15 30 L1 25Z" fill="#d83b01" />
                        <path d="M1 6 L15 0 V5 L6 8 V21 L15 24 V30 L1 25Z" fill="#b3171c" />
                        <path d="M6 8 L15 5 V24 L6 21Z" fill="#fff" />
                        <path d="M11 6.5 L15 5 V24 L11 23Z" fill="#e8501f" />
                    </Svg>
                    <Svg w={31} className="ml-[29px]">
                        <circle cx="15" cy="14" r="11.5" fill="#fff" stroke="#2f9be8" strokeWidth="5" />
                        <path d="M17 28 Q16 22 22 21 Q25 17 28 21 Q31 23 29 27 Q27 29 24 29Z" fill="#eef3f8" stroke="#c8d4e0" />
                    </Svg>
                    <Svg w={29} h={30} className="ml-[25px]">
                        <path d="M0 2 H11 L14 6 H29 V10 H0Z" fill="#e0a410" />
                        <path d="M0 7 H29 V29 H0Z" fill="#fbd24c" />
                        <rect x="8" y="21" width="13" height="8" rx="1" fill="#1d7ac2" />
                    </Svg>
                    <Svg w={31} h={30} className="ml-[25px]">
                        <path d="M1 3 H30 L26 17 L22 27 H18 L15.5 19 L13 27 H9 L5 17Z" fill="#f0301e" />
                        <path d="M8 8 H12 L14 17 L15.5 12 L17.5 17 L21 8 H24 L19 20 L15.5 13 L12 20Z" fill="#fff" />
                    </Svg>
                    <Svg w={30} className="ml-[25px]">
                        <ellipse cx="15" cy="15" rx="14.5" ry="15" fill="#174f9c" />
                        <path d="M17 0 Q2 -1 1 13 Q0 24 10 29 Q18 31 22 27 Q12 27 10 19 Q8 10 15 7 Q19 4 17 0Z" fill="#b8c4d6" />
                        <circle cx="15" cy="15" r="6" fill="#f2f4f8" />
                        <path d="M11 12 Q18 8 20 15 Q20 21 13 20 Q17 18 16 14 Q14 12 11 12Z" fill="#2c6cc0" />
                    </Svg>
                    <div className="ml-[24px] rounded-[2px] overflow-hidden"><Logo size={31} /></div>
                    <div className="ml-[15px] w-[49px] h-[48px] bg-[#f8eeee] rounded-[4px] flex items-center justify-center">
                        <Svg w={30}>
                            <rect x="1" y="1" width="19" height="20" fill="#e4e6ea" />
                            <path d="M3 12 V3 H13" fill="none" stroke="#c83a20" strokeWidth="2.4" strokeDasharray="3 1.5" />
                            <path d="M14 6 V17 L18 23 M14 17 L25 13" fill="none" stroke="#7f858f" strokeWidth="2" />
                            <circle cx="27" cy="12" r="2.5" fill="none" stroke="#2596d8" strokeWidth="1.6" />
                            <circle cx="19" cy="26" r="2.5" fill="none" stroke="#2596d8" strokeWidth="1.6" />
                        </Svg>
                    </div>
                    <Svg w={14} h={10} className="ml-[252px]"><path d="M1 8 L7 2 L13 8" fill="none" stroke="#222" strokeWidth="1.2" /></Svg>
                    <Svg w={18} h={12} className="ml-[15px]">
                        <path d="M4 11 Q0 11 0.8 7.5 Q1.5 5 4 5.5 Q5.5 1 10 1 Q14 1.5 14 5 Q18 6 17 9 Q16.5 11 14 11Z" fill="none" stroke="#222" strokeWidth="1.1" />
                    </Svg>
                    <Svg w={16} h={20} className="ml-[12px]">
                        <path d="M8 1 Q13 1 13 7 Q15 12 14 15 L12 14 Q11 18 8 18 Q5 18 4 14 L2 15 Q1 12 3 7 Q3 1 8 1Z" fill="#222" />
                        <path d="M5 10 Q8 12 11 10 L11.5 14 Q8 17 4.5 14Z" fill="#f4f4f4" />
                    </Svg>
                    <Svg w={20} className="ml-[13px]">
                        <path d="M2 9 Q2 2 9 2 Q12 2 14 4 M15 1 V5 H11" fill="none" stroke="#222" strokeWidth="1.1" />
                        <path d="M2 18 V14 H6 M3 15 Q5 18 9 18" fill="none" stroke="#222" strokeWidth="1.1" />
                        <circle cx="15" cy="14.5" r="5" fill="#0a78d8" />
                    </Svg>
                    <div className="ml-[15px] w-[19px] text-[19px] leading-[24px] text-[#222]">英</div>
                    <Svg w={19} h={16} className="ml-[22px]">
                        <path d="M0.5 5 Q9.5 -3 18.5 5 M3.5 8 Q9.5 2.5 15.5 8 M6.5 11 Q9.5 8.5 12.5 11" fill="none" stroke="#222" strokeWidth="1.2" />
                        <circle cx="9.5" cy="14" r="1.4" fill="#222" />
                    </Svg>
                    <Svg w={19} h={16} className="ml-[11px]">
                        <path d="M1 5 H4 L9 1 V15 L4 11 H1Z" fill="none" stroke="#222" strokeWidth="1.1" />
                        <path d="M11.5 5 Q13.5 8 11.5 11" fill="none" stroke="#222" />
                        <path d="M14 3 Q17 8 14 13 M16.5 1 Q20 8 16.5 15" fill="none" stroke="#aaa" />
                    </Svg>
                    <Svg w={19} h={14} className="ml-[11px]">
                        <path d="M0 2V5M3 2V5M0 5H3V8H0Z" stroke="#111" />
                        <path d="M1.5 8 V13 H6" fill="none" stroke="#111" />
                        <rect x="5" y="2" width="12" height="10" rx="1.5" fill="#111" />
                        <rect x="17" y="5" width="2" height="4" fill="#111" />
                    </Svg>
                    <div className="ml-[19px] w-[72px] text-right text-[14px] leading-[21px] text-[#222] whitespace-nowrap">
                        <div>13:21</div>
                        <div>2022/11/16</div>
                    </div>
                    <div className="ml-[8px] w-[20px] h-[20px] rounded-full bg-[#0a78d4] text-white text-[13px] leading-[20px] text-center">1</div>
                </div>
            </div>
        </div>
    );
}
